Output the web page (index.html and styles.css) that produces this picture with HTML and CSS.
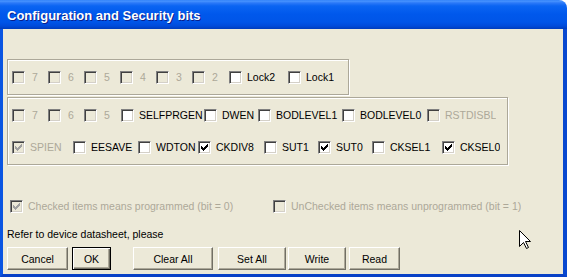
FILE: index.html
```html
<!DOCTYPE html>
<html lang="en">
<head>
  <meta charset="UTF-8">
  <title>Configuration and Security bits</title>
  <link rel="stylesheet" href="styles.css">
</head>
<body>

  <div class="window">
    <div class="titlebar">
      <span class="title">Configuration and Security bits</span>
    </div>

    <div class="client">

      <div class="group lockbits">
        <label class="cb bit w36 off"><span class="box"></span>7</label>
        <label class="cb bit w36 off"><span class="box"></span>6</label>
        <label class="cb bit w36 off"><span class="box"></span>5</label>
        <label class="cb bit w36 off"><span class="box"></span>4</label>
        <label class="cb bit w36 off"><span class="box"></span>3</label>
        <label class="cb bit w37 off"><span class="box"></span>2</label>
        <label class="cb w59"><span class="box"></span>Lock2</label>
        <label class="cb"><span class="box"></span>Lock1</label>
      </div>

      <div class="group fusebits">
        <div class="row">
          <label class="cb bit w36 off"><span class="box"></span>7</label>
          <label class="cb bit w36 off"><span class="box"></span>6</label>
          <label class="cb bit w37 off"><span class="box"></span>5</label>
          <label class="cb w83"><span class="box"></span>SELFPRGEN</label>
          <label class="cb w54"><span class="box"></span>DWEN</label>
          <label class="cb w84"><span class="box"></span>BODLEVEL1</label>
          <label class="cb w85"><span class="box"></span>BODLEVEL0</label>
          <label class="cb off"><span class="box"></span>RSTDISBL</label>
        </div>
        <div class="row">
          <label class="cb w61 off"><span class="box"><svg class="tick" viewBox="0 0 11 11"><path d="M2 4h1v3H2zM3 5h1v3H3zM4 6h1v3H4zM5 5h1v3H5zM6 4h1v3H6zM7 3h1v3H7zM8 2h1v3H8z"/></svg></span>SPIEN</label>
          <label class="cb w65"><span class="box"></span>EESAVE</label>
          <label class="cb w60"><span class="box"></span>WDTON</label>
          <label class="cb w66"><span class="box"><svg class="tick" viewBox="0 0 11 11"><path d="M2 4h1v3H2zM3 5h1v3H3zM4 6h1v3H4zM5 5h1v3H5zM6 4h1v3H6zM7 3h1v3H7zM8 2h1v3H8z"/></svg></span>CKDIV8</label>
          <label class="cb w54"><span class="box"></span>SUT1</label>
          <label class="cb w54"><span class="box"><svg class="tick" viewBox="0 0 11 11"><path d="M2 4h1v3H2zM3 5h1v3H3zM4 6h1v3H4zM5 5h1v3H5zM6 4h1v3H6zM7 3h1v3H7zM8 2h1v3H8z"/></svg></span>SUT0</label>
          <label class="cb w70"><span class="box"></span>CKSEL1</label>
          <label class="cb"><span class="box"><svg class="tick" viewBox="0 0 11 11"><path d="M2 4h1v3H2zM3 5h1v3H3zM4 6h1v3H4zM5 5h1v3H5zM6 4h1v3H6zM7 3h1v3H7zM8 2h1v3H8z"/></svg></span>CKSEL0</label>
        </div>
      </div>

      <div class="legend">
        <label class="cb w263 off"><span class="box"><svg class="tick" viewBox="0 0 11 11"><path d="M2 4h1v3H2zM3 5h1v3H3zM4 6h1v3H4zM5 5h1v3H5zM6 4h1v3H6zM7 3h1v3H7zM8 2h1v3H8z"/></svg></span>Checked items means programmed (bit = 0)</label>
        <label class="cb off"><span class="box"></span>UnChecked items means unprogrammed (bit = 1)</label>
      </div>

      <p class="note">Refer to device datasheet, please</p>

      <div class="buttons">
        <button class="btn cancel">Cancel</button>
        <button class="btn ok">OK</button>
        <button class="btn clear">Clear All</button>
        <button class="btn setall">Set All</button>
        <button class="btn write">Write</button>
        <button class="btn read">Read</button>
      </div>

    </div>

    <!-- mouse pointer left in the screenshot -->
    <svg class="cursor" width="13" height="20" viewBox="0 0 13 20">
      <path d="M0.5 0.5V16.5L4.5 12.5L7.5 18.5L9.5 17.5L6.5 11.5H11.5Z" fill="#fff" stroke="#000" stroke-width="1"/>
    </svg>
  </div>

</body>
</html>
```

FILE: styles.css
```css
body {
  margin: 0;
  background: #fff;
  font-family: 'Liberation Sans', Arial, sans-serif;
  font-size: 10.5px;
}

.window {
  position: relative;
  width: 567px;
  height: 277px;
  display: flex;
  flex-direction: column;
}

.titlebar {
  height: 29px;
  box-sizing: border-box;
  padding: 8px 0 0 7px;
  border-top-right-radius: 8px;
  background: linear-gradient(to bottom, #2a7cf6 0, #4a95ff 1px, #2a78f8 3px, #0a64f2 6px, #0058ec 14px, #0055e8 22px, #004bda 26px, #003cbc 29px);
}

.title {
  color: #fff;
  font-weight: bold;
  font-size: 13px;
  text-shadow: 1px 1px 0 #0a1e8a;
}

.client {
  flex: 1;
  background: #ECE9D8;
  border-left: 3px solid #0a55e2;
  border-right: 4px solid #0848d0;
  border-bottom: 3px solid #0841c6;
}

.group {
  box-sizing: border-box;
  margin-left: 4px;
  border: 1px solid #ACA899;
  box-shadow: inset 1px 1px 0 #fff, 1px 1px 0 #fff;
  padding-left: 4px;
}

.lockbits {
  width: 342px;
  height: 36px;
  margin-top: 30px;
  display: flex;
  align-items: center;
}

.fusebits {
  width: 501px;
  height: 68px;
  margin-top: 2px;
  padding-top: 11px;
  display: flex;
  flex-direction: column;
  gap: 19px;
}

.row {
  display: flex;
  height: 13px;
}

.cb {
  display: flex;
  align-items: center;
  gap: 5px;
  height: 13px;
  line-height: 13px;
  color: #000;
  white-space: nowrap;
  overflow: hidden;
  flex-shrink: 0;
}

.cb.bit { gap: 7px; }
.cb.off { color: #ACA899; }

.box {
  flex-shrink: 0;
  width: 13px;
  height: 13px;
  box-sizing: border-box;
  border: 1px solid;
  border-color: #808080 #fff #fff #808080;
  box-shadow: inset 1px 1px 0 #404040, inset -1px -1px 0 #D4D0C8;
  background: #fff;
}

.off .box { background: #ECE9D8; }

.tick {
  display: block;
  width: 11px;
  height: 11px;
  fill: #000;
  shape-rendering: crispEdges;
}

.off .tick { fill: #A0A0A0; }

.w36 { width: 36px; }
.w37 { width: 37px; }
.w54 { width: 54px; }
.w59 { width: 59px; }
.w60 { width: 60px; }
.w61 { width: 61px; }
.w65 { width: 65px; }
.w66 { width: 66px; }
.w70 { width: 70px; }
.w83 { width: 83px; }
.w84 { width: 84px; }
.w85 { width: 85px; }
.w263 { width: 263px; }

.legend {
  display: flex;
  margin-top: 35px;
  padding-left: 7px;
}

.note {
  margin: 15px 0 0 4px;
  line-height: 13px;
  color: #000;
}

.buttons {
  display: flex;
  margin-top: 6px;
  padding-left: 4px;
}

.btn {
  height: 23px;
  box-sizing: border-box;
  padding: 0;
  font-family: 'Liberation Sans', Arial, sans-serif;
  font-size: 10.5px;
  color: #000;
  background: #ECE9D8;
  border: 1px solid;
  border-color: #fff #716F64 #716F64 #fff;
  box-shadow: inset -1px -1px 0 #ACA899;
}

.btn.ok {
  border: 1px solid #000;
  box-shadow: inset 1px 1px 0 #fff, inset -1px -1px 0 #716F64, inset -2px -2px 0 #ACA899;
}

.cancel { width: 61px; }
.ok { width: 39px; margin-left: 4px; }
.clear { width: 80px; margin-left: 22px; }
.setall { width: 68px; margin-left: 5px; }
.write { width: 58px; margin-left: 2px; }
.read { width: 51px; margin-left: 3px; }

.cursor {
  position: absolute;
  left: 519px;
  top: 230px;
}
```
